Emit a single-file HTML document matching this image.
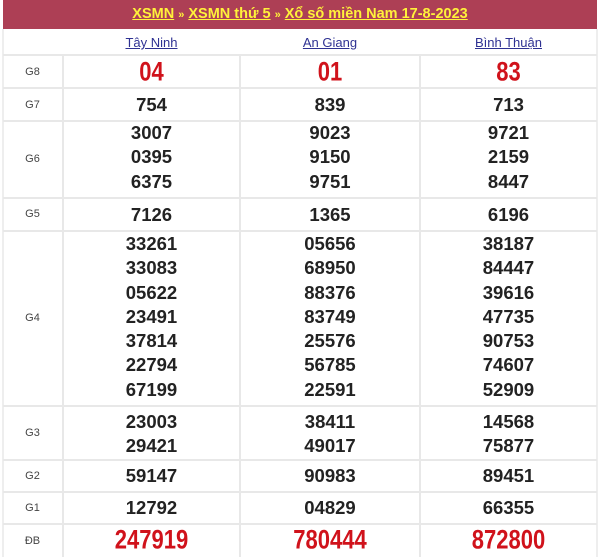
<!DOCTYPE html>
<html><head><meta charset="utf-8"><style>
*{margin:0;padding:0;box-sizing:border-box}
body{width:600px;height:557px;background:#fff;position:relative;overflow:hidden;font-family:"Liberation Sans",Arial,sans-serif}
.hd{position:absolute;left:3px;top:0;width:594px;height:29px;background:#ad3f55;text-align:center;color:#fff23a;font-weight:bold;font-size:14.5px;line-height:29px}
.hd u{text-decoration:underline}
.hd span{font-size:11px;color:#fff23a}
.vl{position:absolute;top:29px;bottom:0;width:2px;background:#e8e8e8}
.hl{position:absolute;left:3px;width:594px;height:2px;background:#e8e8e8}
.lab{position:absolute;left:3px;width:59px;text-align:center;font-size:11px;color:#444}
.pv{position:absolute;top:35px;font-size:13px;color:#2e3192;text-decoration:underline;text-align:center}
.n{position:absolute;text-align:center;font-weight:bold;font-size:18.5px;color:#222;line-height:24.3px}
.r{position:absolute;text-align:center;font-weight:bold;font-size:22px;color:#d0121b;transform:scaleY(1.2)}
</style></head><body>
<div class="hd"><u>XSMN</u> <span>»</span> <u>XSMN thứ 5</u> <span>»</span> <u>Xổ số miền Nam 17-8-2023</u></div>
<div class="vl" style="left:2px;background:#eee"></div>
<div class="vl" style="left:62px;top:55px"></div>
<div class="vl" style="left:239px;top:55px"></div>
<div class="vl" style="left:419px;top:55px"></div>
<div class="vl" style="left:596px;background:#eee"></div>
<div class="hl" style="top:54px"></div>
<div class="hl" style="top:87px"></div>
<div class="hl" style="top:120px"></div>
<div class="hl" style="top:197px"></div>
<div class="hl" style="top:230px"></div>
<div class="hl" style="top:405px"></div>
<div class="hl" style="top:459px"></div>
<div class="hl" style="top:491px"></div>
<div class="hl" style="top:523px"></div>
<div class="pv" style="left:63px;width:177px">Tây Ninh</div>
<div class="pv" style="left:240px;width:180px">An Giang</div>
<div class="pv" style="left:420px;width:177px">Bình Thuận</div>

<div class="lab" style="top:66px">G8</div>
<div class="lab" style="top:99px">G7</div>
<div class="lab" style="top:153px">G6</div>
<div class="lab" style="top:208px">G5</div>
<div class="lab" style="top:312px">G4</div>
<div class="lab" style="top:427px">G3</div>
<div class="lab" style="top:470px">G2</div>
<div class="lab" style="top:502px">G1</div>
<div class="lab" style="top:535px">ĐB</div>

<div class="r" style="left:63px;width:177px;top:59px">04</div>
<div class="r" style="left:240px;width:180px;top:59px">01</div>
<div class="r" style="left:420px;width:177px;top:59px">83</div>

<div class="n" style="left:63px;width:177px;top:93px">754</div>
<div class="n" style="left:240px;width:180px;top:93px">839</div>
<div class="n" style="left:420px;width:177px;top:93px">713</div>

<div class="n" style="left:63px;width:177px;top:121px">3007<br>0395<br>6375</div>
<div class="n" style="left:240px;width:180px;top:121px">9023<br>9150<br>9751</div>
<div class="n" style="left:420px;width:177px;top:121px">9721<br>2159<br>8447</div>

<div class="n" style="left:63px;width:177px;top:203px">7126</div>
<div class="n" style="left:240px;width:180px;top:203px">1365</div>
<div class="n" style="left:420px;width:177px;top:203px">6196</div>

<div class="n" style="left:63px;width:177px;top:232px">33261<br>33083<br>05622<br>23491<br>37814<br>22794<br>67199</div>
<div class="n" style="left:240px;width:180px;top:232px">05656<br>68950<br>88376<br>83749<br>25576<br>56785<br>22591</div>
<div class="n" style="left:420px;width:177px;top:232px">38187<br>84447<br>39616<br>47735<br>90753<br>74607<br>52909</div>

<div class="n" style="left:63px;width:177px;top:410px">23003<br>29421</div>
<div class="n" style="left:240px;width:180px;top:410px">38411<br>49017</div>
<div class="n" style="left:420px;width:177px;top:410px">14568<br>75877</div>

<div class="n" style="left:63px;width:177px;top:464px">59147</div>
<div class="n" style="left:240px;width:180px;top:464px">90983</div>
<div class="n" style="left:420px;width:177px;top:464px">89451</div>

<div class="n" style="left:63px;width:177px;top:496px">12792</div>
<div class="n" style="left:240px;width:180px;top:496px">04829</div>
<div class="n" style="left:420px;width:177px;top:496px">66355</div>

<div class="r" style="left:63px;width:177px;top:527px">247919</div>
<div class="r" style="left:240px;width:180px;top:527px">780444</div>
<div class="r" style="left:420px;width:177px;top:527px">872800</div>
</body></html>
